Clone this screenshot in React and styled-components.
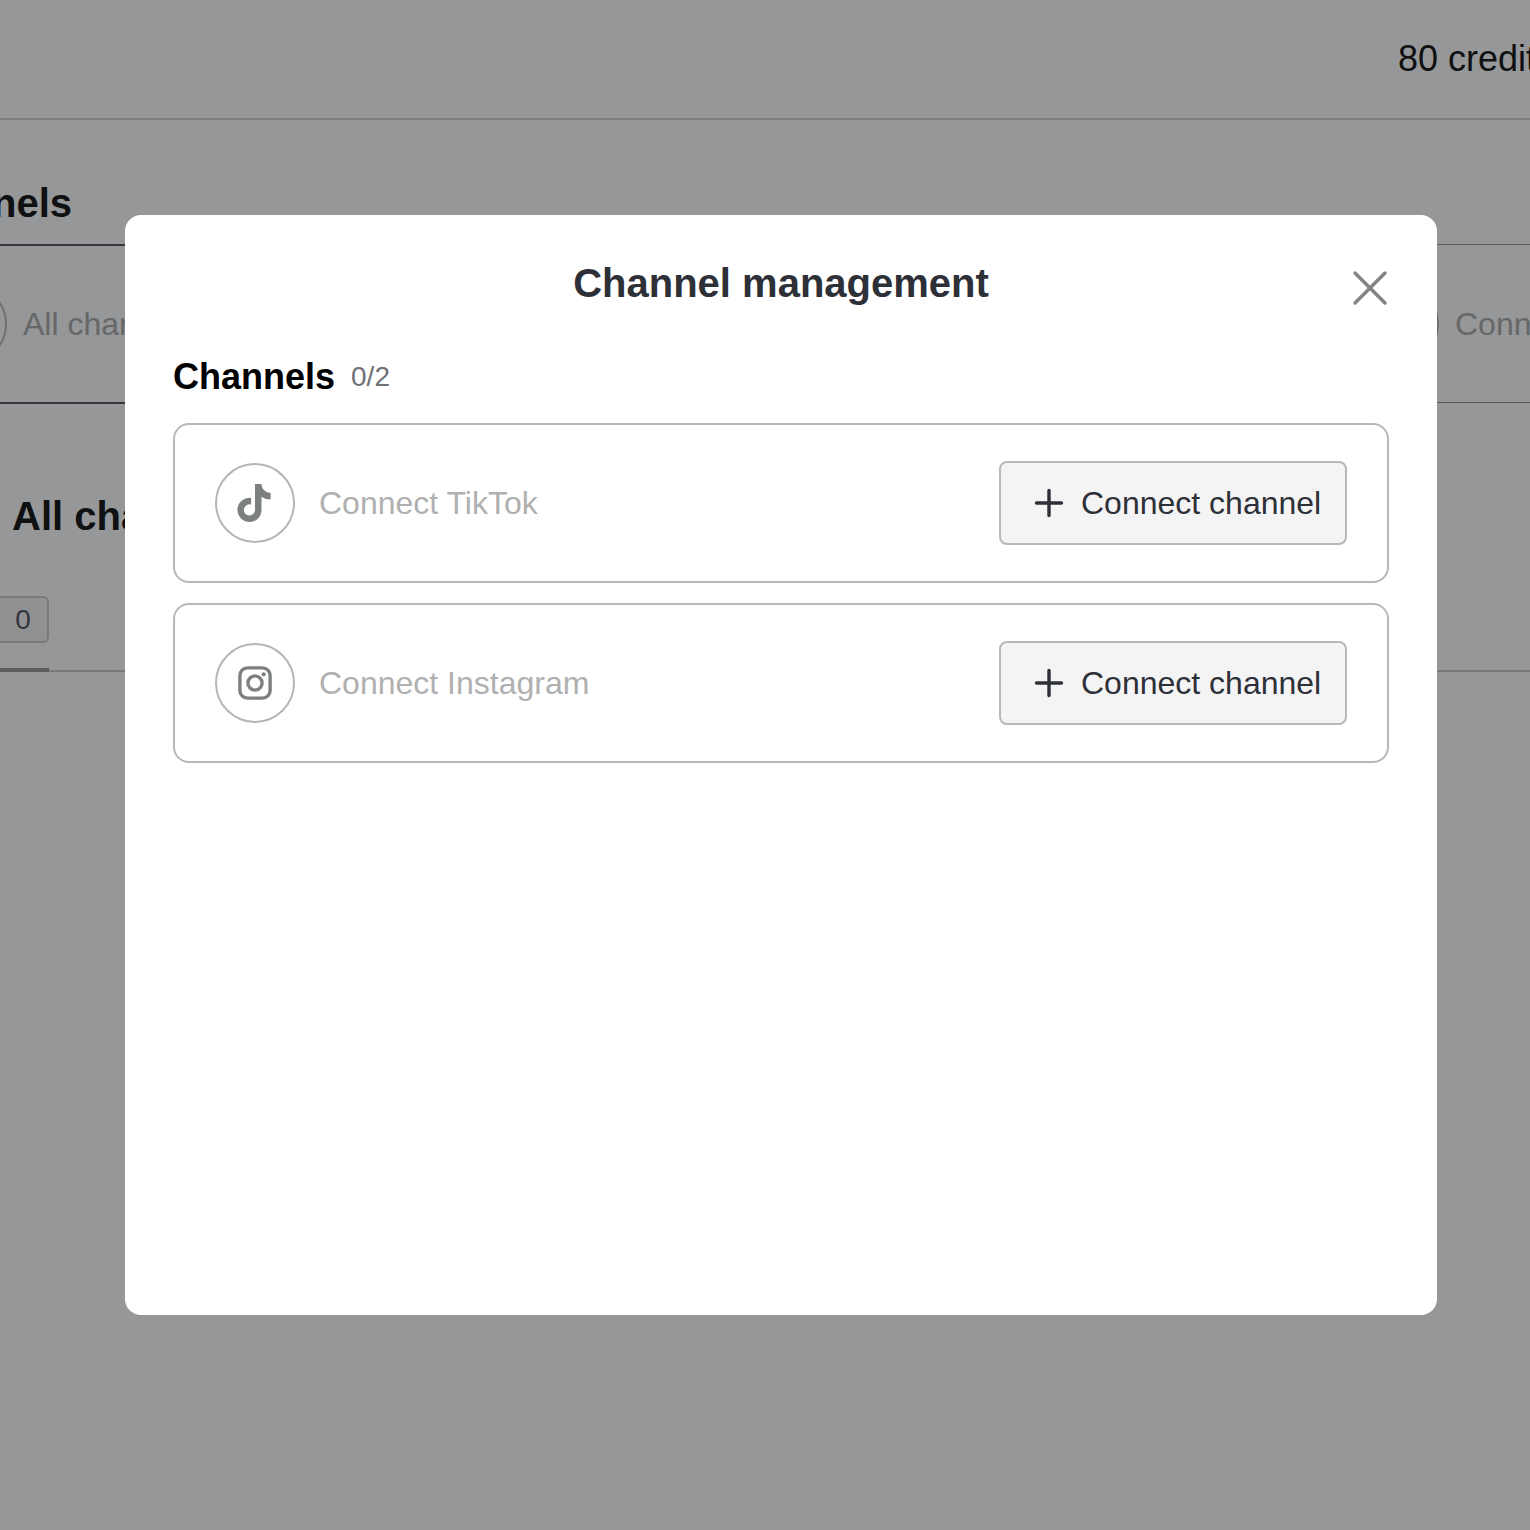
import React from "react";
import styled, { createGlobalStyle } from "styled-components";
import { FaTiktok } from "react-icons/fa";

const GlobalStyle = createGlobalStyle`
  html, body {
    margin: 0;
    padding: 0;
    background: #fff;
    font-family: "Liberation Sans", Arial, sans-serif;
  }
`;

const Page = styled.div`
  position: relative;
  width: 1530px;
  height: 1530px;
  overflow: hidden;
  background: #fff;
`;

const TopBar = styled.header`
  box-sizing: border-box;
  height: 120px;
  display: flex;
  align-items: center;
  padding-left: 1398px;
  border-bottom: 2px solid #d0d0d0;
`;

const Credits = styled.span`
  font-size: 36px;
  line-height: 42px;
  white-space: nowrap;
  color: #000;
`;

const SectionHead = styled.div`
  height: 124px;
  display: flex;
  align-items: flex-end;
  padding-bottom: 18px;
  box-sizing: border-box;
`;

const PageTitle = styled.h1`
  margin: 0 0 0 -108px;
  font-size: 40px;
  line-height: 46px;
  font-weight: 700;
  color: #000;
  white-space: nowrap;
`;

const Rule = styled.div`
  display: flex;
  height: 2px;
`;

const RuleStrong = styled.div`
  width: 300px;
  background: #4a4b55;
`;

const RuleSoft = styled.div`
  flex: 1;
  height: 1px;
  background: #8a8a8a;
`;

const ChannelTabs = styled.div`
  height: 156px;
  display: flex;
  align-items: center;
  margin-left: -73px;
`;

const ChannelTab = styled.div`
  display: flex;
  align-items: center;
  gap: 16px;
  width: ${(p) => p.$width}px;
  flex: none;
`;

const TabCircle = styled.div`
  box-sizing: border-box;
  width: 80px;
  height: 80px;
  border-radius: 50%;
  border: 2px solid #b5b5b5;
`;

const TabLabel = styled.span`
  font-size: 32px;
  color: #a4a4a4;
  white-space: nowrap;
`;

const ListTitle = styled.h2`
  margin: 89px 0 0 12px;
  font-size: 40px;
  line-height: 46px;
  font-weight: 700;
  color: #000;
  white-space: nowrap;
`;

const Filters = styled.div`
  margin-top: 57px;
  height: 76px;
  box-sizing: border-box;
  border-bottom: 2px solid #c8c8c8;
  position: relative;
`;

const CountBadge = styled.div`
  box-sizing: border-box;
  width: 49px;
  height: 47px;
  padding-right: 1px;
  border: 2px solid #c8c8c8;
  border-left: none;
  border-radius: 0 6px 6px 0;
  background: #f4f4f4;
  display: flex;
  align-items: center;
  justify-content: center;
  font-size: 28px;
  color: #4a4b55;
`;

const ActiveMark = styled.div`
  position: absolute;
  left: 0;
  bottom: -2px;
  width: 49px;
  height: 4px;
  background: #929292;
`;

const Overlay = styled.div`
  position: absolute;
  inset: 0;
  background: rgba(32, 34, 36, 0.47);
`;

const Modal = styled.section`
  position: absolute;
  left: 125px;
  top: 215px;
  box-sizing: border-box;
  width: 1312px;
  height: 1100px;
  padding: 48px;
  background: #fff;
  border-radius: 16px;
`;

const ModalHeader = styled.div`
  position: relative;
  display: flex;
  justify-content: center;
  height: 46px;
  margin-top: -3px;
`;

const ModalTitle = styled.h2`
  margin: 0;
  font-size: 40px;
  line-height: 46px;
  font-weight: 700;
  color: #2e3038;
`;

const CloseButton = styled.button`
  position: absolute;
  right: 0;
  top: 9px;
  width: 38px;
  height: 38px;
  padding: 0;
  border: none;
  background: none;
  color: #808584;
  svg {
    display: block;
  }
`;

const ChannelsHead = styled.div`
  display: flex;
  align-items: center;
  gap: 16px;
  margin-top: 50px;
  margin-bottom: 25px;
  height: 42px;
`;

const ChannelsTitle = styled.h3`
  margin: 0;
  font-size: 36px;
  font-weight: 700;
  color: #000;
`;

const ChannelsCount = styled.span`
  font-size: 28px;
  color: #6f7176;
`;

const CardList = styled.div`
  display: flex;
  flex-direction: column;
  gap: 20px;
`;

const Card = styled.div`
  box-sizing: border-box;
  height: 160px;
  display: flex;
  align-items: center;
  justify-content: space-between;
  padding: 0 40px;
  border: 2px solid #b8b8b8;
  border-radius: 16px;
`;

const CardLeft = styled.div`
  display: flex;
  align-items: center;
  gap: 24px;
`;

const IconCircle = styled.div`
  box-sizing: border-box;
  width: 80px;
  height: 80px;
  border: 2px solid #b5b5b5;
  border-radius: 50%;
  display: flex;
  align-items: center;
  justify-content: center;
  color: #7c8080;
  svg.tiktok {
    margin-left: -3px;
  }
`;

const CardLabel = styled.span`
  font-size: 32px;
  color: #b0b0b0;
`;

const ConnectButton = styled.button`
  box-sizing: border-box;
  width: 348px;
  height: 84px;
  display: flex;
  align-items: center;
  gap: 17px;
  padding: 0 0 0 33px;
  border: 2px solid #b8b8b8;
  border-radius: 8px;
  background: #f4f4f4;
  font-family: inherit;
  font-size: 32px;
  color: #2e3038;
  white-space: nowrap;
  svg {
    flex: none;
  }
`;

const PlusIcon = () => (
  <svg width="30" height="30" viewBox="0 0 30 30" fill="none" stroke="currentColor" strokeWidth="3.4" strokeLinecap="round">
    <path d="M15 2.5v25M2.5 15h25" />
  </svg>
);

const CloseIcon = () => (
  <svg width="38" height="38" viewBox="0 0 38 38" fill="none" stroke="currentColor" strokeWidth="3.4" strokeLinecap="round">
    <path d="M4 4l30 30M34 4L4 34" />
  </svg>
);

const InstagramIcon = () => (
  <svg width="34" height="34" viewBox="0 0 36 36" fill="none" stroke="currentColor" strokeWidth="3.6">
    <rect x="2" y="2" width="32" height="32" rx="8" />
    <circle cx="18" cy="18" r="7.5" />
    <circle cx="27.2" cy="8.8" r="2.2" fill="currentColor" stroke="none" />
  </svg>
);

const channels = [
  { id: "tiktok", label: "Connect TikTok", icon: <FaTiktok size={38} className="tiktok" /> },
  { id: "instagram", label: "Connect Instagram", icon: <InstagramIcon /> },
];

export default function App() {
  return (
    <Page>
      <GlobalStyle />
      <TopBar>
        <Credits>80 credits</Credits>
      </TopBar>
      <SectionHead>
        <PageTitle>Channels</PageTitle>
      </SectionHead>
      <Rule>
        <RuleStrong />
        <RuleSoft />
      </Rule>
      <ChannelTabs>
        <ChannelTab $width={1432}>
          <TabCircle />
          <TabLabel>All channels</TabLabel>
        </ChannelTab>
        <ChannelTab $width={300}>
          <TabCircle />
          <TabLabel>Connect</TabLabel>
        </ChannelTab>
      </ChannelTabs>
      <Rule>
        <RuleStrong />
        <RuleSoft />
      </Rule>
      <ListTitle>All channels</ListTitle>
      <Filters>
        <CountBadge>0</CountBadge>
        <ActiveMark />
      </Filters>
      <Overlay />
      <Modal>
        <ModalHeader>
          <ModalTitle>Channel management</ModalTitle>
          <CloseButton aria-label="Close">
            <CloseIcon />
          </CloseButton>
        </ModalHeader>
        <ChannelsHead>
          <ChannelsTitle>Channels</ChannelsTitle>
          <ChannelsCount>0/2</ChannelsCount>
        </ChannelsHead>
        <CardList>
          {channels.map((c) => (
            <Card key={c.id}>
              <CardLeft>
                <IconCircle>{c.icon}</IconCircle>
                <CardLabel>{c.label}</CardLabel>
              </CardLeft>
              <ConnectButton>
                <PlusIcon />
                Connect channel
              </ConnectButton>
            </Card>
          ))}
        </CardList>
      </Modal>
    </Page>
  );
}
